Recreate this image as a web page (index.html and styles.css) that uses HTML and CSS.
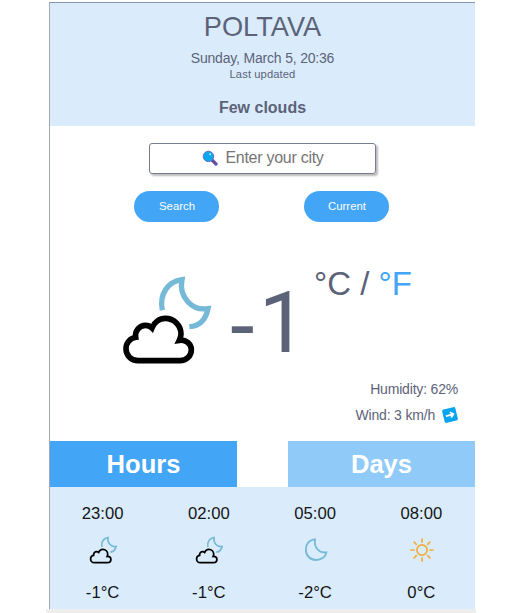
FILE: index.html
```html
<!DOCTYPE html>
<html lang="en">
<head>
<meta charset="utf-8">
<title>Weather</title>
<link rel="stylesheet" href="styles.css">
</head>
<body>
<svg width="0" height="0" class="defs">
  <symbol id="cloud-moon" viewBox="36 60 273 270">
    <path class="moon" stroke-width="16" d="M157 166C147 115 175 80 216 74C206 125 245 168 294 161C287 195 268 213 238 215"/>
    <path class="cloud" stroke-width="17" d="M84 317C64 317 48 301 48 281C48 264 60 250 77 247C74 228 88 211 106 211C114 211 121 214 126 219C133 202 148 190 166 190C192 190 213 211 213 237C213 243 211 250 208 256C228 253 244 267 244 284C244 303 229 317 210 317Z"/>
  </symbol>
</svg>
<main class="app">
  <header class="head">
    <h1 class="city">POLTAVA</h1>
    <p class="date">Sunday, March 5, 20:36</p>
    <p class="updated">Last updated</p>
    <p class="sky">Few clouds</p>
  </header>
  <form class="search">
    <div class="field">
      <svg class="glass" viewBox="0 0 16 16"><path d="M10 10L14 14" stroke="#5f539f" stroke-width="3.2" stroke-linecap="round"/><circle cx="6.4" cy="6.4" r="5.2" fill="#08a8f0" stroke="#5f6db8" stroke-width="1"/><circle cx="8.2" cy="4.3" r="1" fill="#b7eaff"/></svg>
      <span>Enter your city</span>
    </div>
    <div class="buttons">
      <button type="button">Search</button>
      <button type="button">Current</button>
    </div>
  </form>
  <section class="now">
    <svg class="now-icon"><use href="#cloud-moon"/></svg>
    <span class="temp">-<span class="digit">1</span></span>
    <span class="units">°C / <a>°F</a></span>
  </section>
  <section class="details">
    <p>Humidity: 62%</p>
    <p>Wind: 3 km/h <svg class="wind" viewBox="0 0 16 16"><g transform="rotate(-14 8 8)"><rect x="1.2" y="1.2" width="13.6" height="13.6" rx="1.8" fill="#08a4f0"/><path d="M3.8 8H11M8.5 5.2L11.4 8L8.5 10.8" fill="none" stroke="#fff" stroke-width="1.8"/></g></svg></p>
  </section>
  <nav class="tabs">
    <div class="tab">Hours</div>
    <div class="tab tab-off">Days</div>
  </nav>
  <section class="forecast">
    <div class="slot"><span>23:00</span><svg class="duo"><use href="#cloud-moon"/></svg><span>-1°C</span></div>
    <div class="slot"><span>02:00</span><svg class="duo"><use href="#cloud-moon"/></svg><span>-1°C</span></div>
    <div class="slot"><span>05:00</span><svg viewBox="0 0 28 28"><path class="moon" stroke-width="1.8" d="M13 3.3C7.5 3.6 3.8 8 3.8 13.5C3.8 19.5 8.2 24 14 24C19.5 24 23.8 20.8 24.4 16.3C17 17.5 11.8 11.2 13 3.3Z"/></svg><span>-2°C</span></div>
    <div class="slot"><span>08:00</span><svg viewBox="0 0 28 28"><g class="sun"><circle cx="14" cy="14" r="5.1"/><path d="M14 3V6M14 22V25M3 14H6M22 14H25M6.2 6.2L8.3 8.3M19.7 19.7L21.8 21.8M6.2 21.8L8.3 19.7M19.7 8.3L21.8 6.2"/></g></svg><span>0°C</span></div>
  </section>
</main>
<div class="strip"></div>
</body>
</html>
```

FILE: styles.css
```css
* { box-sizing: border-box; margin: 0; }
body { background: #fff; font-family: "Liberation Sans", Arial, sans-serif; color: #5c6379; padding-top: 2px; height: 613px; overflow: hidden; }
.defs { display: none; }
.app { width: 426px; height: 607px; margin-left: 49px; border-top: 1px solid #8793a8; border-left: 1px solid #a3a8b5; }
.head { height: 123px; padding-top: 8px; background: #daecfc; text-align: center; }
.city { font-size: 27.2px; line-height: 32px; font-weight: 400; }
.date { font-size: 14px; letter-spacing: -0.19px; line-height: 16px; margin-top: 7px; }
.updated { font-size: 11.2px; line-height: 14px; margin-top: 1px; letter-spacing: 0.1px; }
.sky { font-size: 16px; line-height: 20px; margin-top: 17px; font-weight: 700; }
.search { padding-top: 17px; height: 95px; }
.field { width: 227px; height: 31px; margin-left: 99px; border: 1px solid #777d90; border-radius: 3px; box-shadow: 2px 2px 2px #bbb; display: flex; align-items: center; justify-content: center; gap: 7px; color: #757575; font-size: 16px; letter-spacing: -0.27px; line-height: 26px; padding: 0 0 2px 1px; }
.glass { width: 16px; height: 16px; }
.buttons { display: flex; gap: 85px; margin: 17px 0 0 84px; }
button { width: 85px; height: 31px; padding: 0 0 2px 1px; border: 0; border-radius: 16px; background: #42a5f5; color: #fff; font: 11.4px "Liberation Sans", Arial, sans-serif; }
.now { height: 155px; padding-left: 72px; display: flex; align-items: flex-start; }
.now-icon { width: 91px; height: 90px; margin-top: 54px; flex: none; }
.temp { width: 77px; font-size: 86px; line-height: 96px; margin: 53px 0 0 15px; white-space: nowrap; flex: none; }
.digit { font-family: Roboto, "Liberation Sans", sans-serif; line-height: 1; margin-left: 2px; }
.units { font-size: 33px; line-height: 40px; margin: 43px 0 0 9px; white-space: nowrap; }
.units a { color: #42a5f5; }
.details { height: 65px; padding-right: 17px; font-size: 14px; letter-spacing: -0.19px; text-align: right; }
.details p { height: 26px; display: flex; align-items: center; justify-content: flex-end; gap: 7px; }
.wind { width: 16px; height: 16px; }
.tabs { display: flex; justify-content: space-between; height: 46px; }
.tab { width: 187px; background: #42a5f5; color: #fff; font-size: 25.6px; font-weight: 700; line-height: 46px; text-align: center; }
.tab-off { background: #90caf9; }
.forecast { display: grid; grid-template-columns: repeat(4, 1fr); height: 122px; background: #daecfc; color: #151515; }
.slot { display: flex; flex-direction: column; align-items: center; font-size: 16.7px; line-height: 20px; padding: 17px 1px 0 0; }
.slot svg { width: 28px; height: 28px; margin: 12px 0 19px 1px; }
.slot .duo { width: 29px; }
.moon { fill: none; stroke: #75b9d7; }
.cloud { fill: none; stroke: #000; }
.sun { fill: none; stroke: #f2ad3c; stroke-width: 1.7; stroke-linecap: round; }
.strip { width: 430px; height: 4px; margin-left: 46px; background: #eee; }
```
